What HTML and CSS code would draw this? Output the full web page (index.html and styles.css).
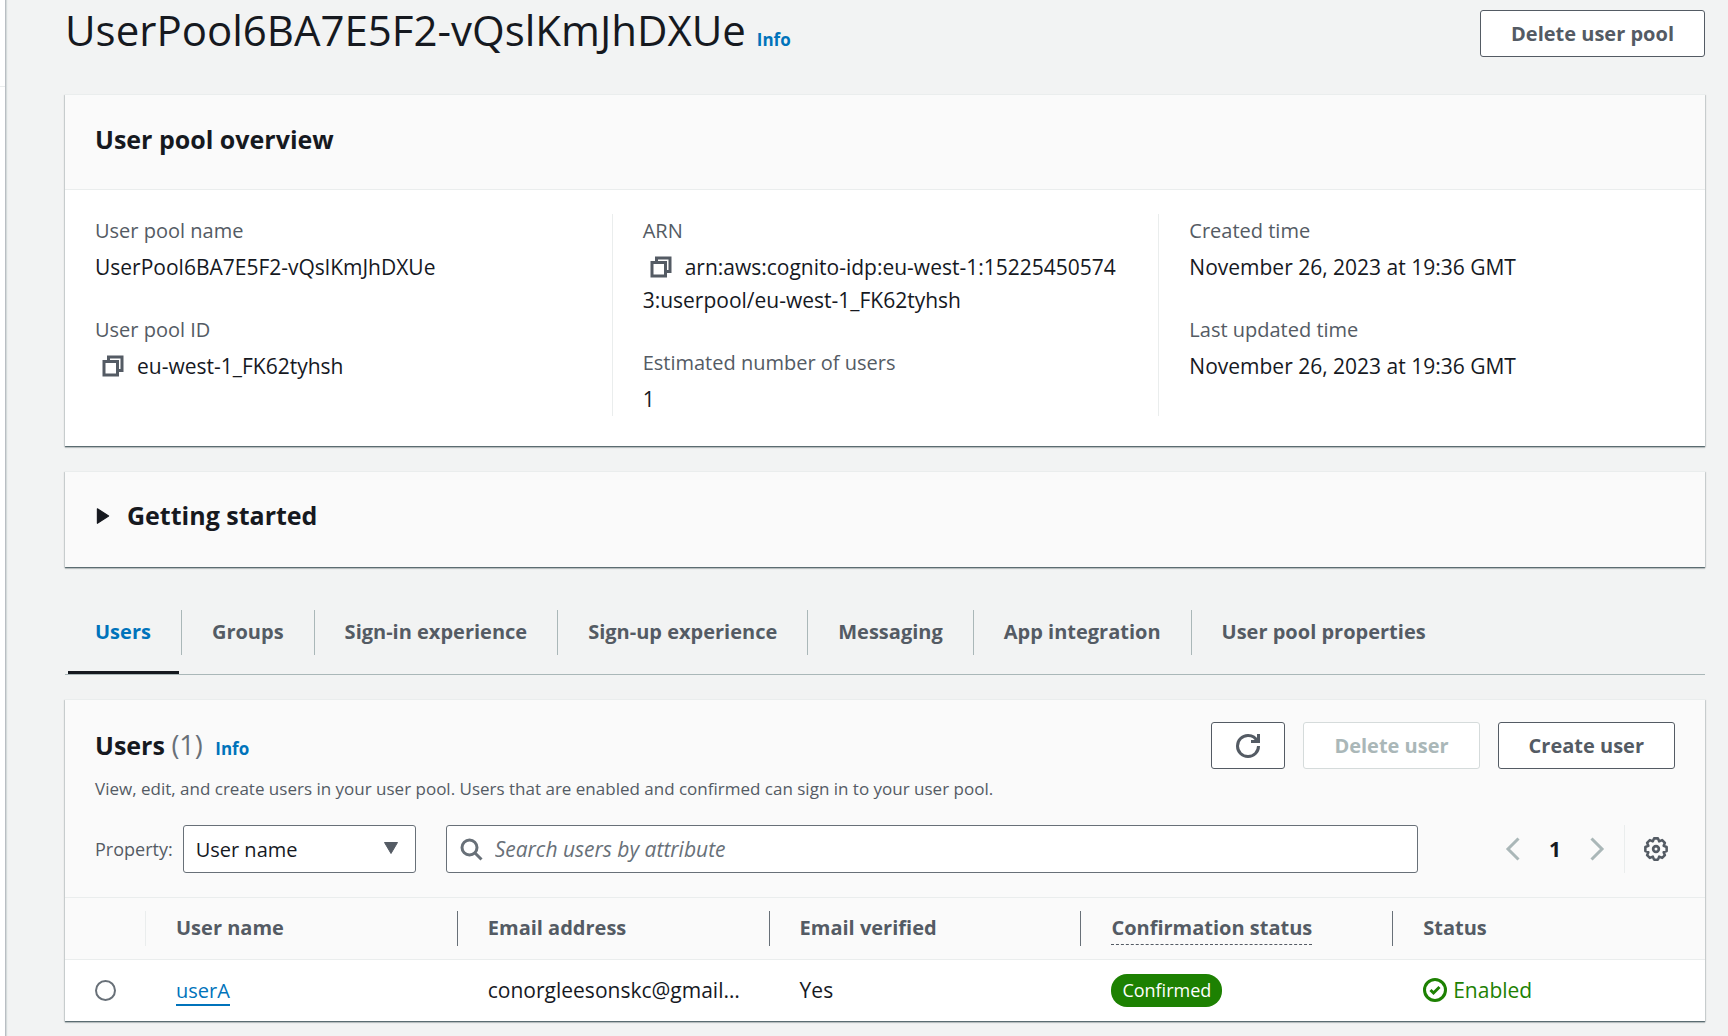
FILE: index.html
```html
<!DOCTYPE html>
<html lang="en">
<head>
<meta charset="utf-8">
<title>User pool</title>
<link rel="stylesheet" href="styles.css">
</head>
<body>
<aside class="sidebar"><hr class="sidebar-rule"></aside>
<main class="content">
  <header class="page-header">
    <h1 class="page-title">UserPool6BA7E5F2-vQslKmJhDXUe <a class="info" href="#info">Info</a></h1>
    <button class="button" type="button">Delete user pool</button>
  </header>

  <section class="card">
    <header class="card-header"><h2 class="card-title">User pool overview</h2></header>
    <div class="overview">
      <dl class="overview-column">
        <div class="pair"><dt>User pool name</dt><dd>UserPool6BA7E5F2-vQslKmJhDXUe</dd></div>
        <div class="pair"><dt>User pool ID</dt><dd><button class="copy" type="button" aria-label="Copy user pool ID"><svg class="icon" viewBox="0 0 16 16"><path d="M2 5h9v9H2zM5 5V2h9v9h-3"/></svg></button>eu-west-1_FK62tyhsh</dd></div>
      </dl>
      <dl class="overview-column">
        <div class="pair"><dt>ARN</dt><dd><button class="copy" type="button" aria-label="Copy ARN"><svg class="icon" viewBox="0 0 16 16"><path d="M2 5h9v9H2zM5 5V2h9v9h-3"/></svg></button>arn:aws:cognito-idp:eu-west-1:152254505743:userpool/eu-west-1_FK62tyhsh</dd></div>
        <div class="pair"><dt>Estimated number of users</dt><dd>1</dd></div>
      </dl>
      <dl class="overview-column">
        <div class="pair"><dt>Created time</dt><dd>November 26, 2023 at 19:36 GMT</dd></div>
        <div class="pair"><dt>Last updated time</dt><dd>November 26, 2023 at 19:36 GMT</dd></div>
      </dl>
    </div>
  </section>

  <section class="card">
    <h2 class="card-title">
      <button class="expander" type="button" aria-expanded="false"><svg class="caret" viewBox="0 0 14 16"><path d="M2 1.500L12 8L2 14.500Z"/></svg>Getting started</button>
    </h2>
  </section>

  <nav class="tabs" aria-label="User pool sections">
    <a class="tab tab-active" href="#users" aria-current="page"><span>Users</span></a>
    <a class="tab" href="#groups"><span>Groups</span></a>
    <a class="tab" href="#sign-in"><span>Sign-in experience</span></a>
    <a class="tab" href="#sign-up"><span>Sign-up experience</span></a>
    <a class="tab" href="#messaging"><span>Messaging</span></a>
    <a class="tab" href="#apps"><span>App integration</span></a>
    <a class="tab" href="#properties"><span>User pool properties</span></a>
  </nav>

  <section class="card">
    <header class="users-header">
      <div class="users-top">
        <h2 class="users-title">Users <span class="counter">(1)</span> <a class="info" href="#users-info">Info</a></h2>
        <div class="actions">
          <button class="button button-icon" type="button" aria-label="Refresh"><svg class="icon" viewBox="0 0 16 16"><path d="M10 5h5V0"/><path d="M15 8a6.957 6.957 0 0 1-7 7 6.957 6.957 0 0 1-7-7 6.957 6.957 0 0 1 7-7 6.870 6.870 0 0 1 6.300 4"/></svg></button>
          <button class="button" type="button" disabled>Delete user</button>
          <button class="button" type="button">Create user</button>
        </div>
      </div>
      <p class="description">View, edit, and create users in your user pool. Users that are enabled and confirmed can sign in to your user pool.</p>
      <div class="filters">
        <label class="property-label" for="property">Property:</label>
        <div class="select">
          <select id="property"><option>User name</option></select>
          <svg class="select-caret" viewBox="0 0 16 14"><path d="M1.500 1.500h13L8 12.500z"/></svg>
        </div>
        <label class="search">
          <svg class="icon" viewBox="0 0 16 16"><circle cx="7" cy="7" r="5"/><path d="m15 15-4.500-4.500"/></svg>
          <input type="search" placeholder="Search users by attribute" aria-label="Search users by attribute">
        </label>
        <div class="pagination">
          <button class="page-arrow" type="button" disabled aria-label="Previous page"><svg class="icon" viewBox="0 0 16 16"><path d="m11 1-7 7 7 7"/></svg></button>
          <button class="page-number" type="button">1</button>
          <button class="page-arrow" type="button" disabled aria-label="Next page"><svg class="icon" viewBox="0 0 16 16"><path d="m5 1 7 7-7 7"/></svg></button>
        </div>
        <div class="preferences">
          <button class="page-arrow settings" type="button" aria-label="Preferences"><svg class="icon" viewBox="-8 -8 16 16"><path stroke-width="1.700" stroke-linejoin="round" d="M7.100-1.300V1.300L5.100 2.100L5.940 4.100L4.100 5.940L2.100 5.100L1.300 7.100H-1.300L-2.100 5.100L-4.100 5.940L-5.940 4.100L-5.100 2.100L-7.100 1.300V-1.300L-5.100-2.100L-5.940-4.100L-4.100-5.940L-2.100-5.100L-1.300-7.100H1.300L2.100-5.100L4.100-5.940L5.940-4.100L5.100-2.100Z"/><circle cx="0" cy="0" r="1.900" stroke-width="1.800"/></svg></button>
        </div>
      </div>
    </header>
    <table class="table">
      <colgroup><col class="col-select"><col><col><col><col><col></colgroup>
      <thead>
        <tr>
          <th scope="col" aria-label="Selection"><div class="head"></div></th>
          <th scope="col"><div class="head">User name</div></th>
          <th scope="col"><div class="head">Email address</div></th>
          <th scope="col"><div class="head">Email verified</div></th>
          <th scope="col"><div class="head"><span class="hint">Confirmation status</span></div></th>
          <th scope="col"><div class="head">Status</div></th>
        </tr>
      </thead>
      <tbody>
        <tr>
          <td><input class="radio" type="radio" name="user" aria-label="Select userA"></td>
          <td><a class="user-link" href="#userA">userA</a></td>
          <td>conorgleesonskc@gmail…</td>
          <td>Yes</td>
          <td><span class="badge">Confirmed</span></td>
          <td><span class="status"><svg class="icon" viewBox="0 0 16 16"><circle cx="8" cy="8" r="7"/><path d="m5 8 2 2 4-4"/></svg>Enabled</span></td>
        </tr>
      </tbody>
    </table>
  </section>
</main>
</body>
</html>
```
FILE: styles.css
```css
* {
  box-sizing: border-box;
}

body {
  margin: 0;
  min-height: 100vh;
  display: flex;
  background: #f2f3f3;
  color: #16191f;
  font: 21px/33px "Open Sans", "Noto Sans", sans-serif;
}

h1, h2, p, dl, dd {
  margin: 0;
}

button, input, select {
  font: inherit;
  color: inherit;
}

a {
  text-decoration: none;
}

.icon {
  display: block;
  width: 24px;
  height: 24px;
  fill: none;
  stroke: currentColor;
  stroke-width: 2;
}

.sidebar {
  width: 6px;
  flex: none;
  background: #fff;
  border-right: 1px solid #b9bec3;
  box-shadow: 1px 0 1px #d5dbdb;
}

.sidebar-rule {
  margin: 86px 0 0;
  border: 0;
  border-top: 1px solid #eaeded;
}

.content {
  flex: 1;
  min-width: 0;
  padding: 10px 23px 15px 59px;
}

.page-header {
  display: flex;
  justify-content: space-between;
  align-items: flex-start;
  margin-bottom: 37px;
}

.page-title {
  font-size: 42px;
  line-height: 40px;
  font-weight: 400;
}

.info {
  color: #0073bb;
  font-size: 17px;
  line-height: 17px;
  font-weight: 700;
}

.button {
  height: 47px;
  padding: 0 30px;
  border: 1px solid #545b64;
  border-radius: 3px;
  background: #fff;
  color: #545b64;
  font-size: 20px;
  font-weight: 700;
}

.button:disabled {
  border-color: #d5dbdb;
  color: #aab7b8;
}

.button-icon {
  padding: 0 24px;
}

.card {
  margin-bottom: 25px;
  background: #fff;
  border-top: 1px solid #eaeded;
  box-shadow: 0 1px 0 rgba(0, 28, 36, 0.35), 0 2px 1px rgba(0, 28, 36, 0.2), 1px 1px 1px rgba(0, 28, 36, 0.15), -1px 1px 1px rgba(0, 28, 36, 0.15);
}

.card-title {
  font-size: 25px;
  line-height: 33px;
  font-weight: 700;
}

.card-header {
  padding: 28px 30px 33px;
  background: #fafafa;
  border-bottom: 1px solid #eaeded;
}

.overview {
  display: grid;
  grid-template-columns: repeat(3, 1fr);
  padding: 24px 0 30px;
}

.overview-column {
  display: flex;
  flex-direction: column;
  gap: 29px;
  padding: 0 30px;
}

.overview-column + .overview-column {
  border-left: 1px solid #eaeded;
}

.pair {
  display: flex;
  flex-direction: column;
  gap: 4px;
}

dt {
  color: #545b64;
  font-size: 20px;
}

dd {
  word-break: break-all;
}

.copy {
  height: 32px;
  padding: 0 12px 0 6px;
  border: 0;
  background: none;
  color: #545b64;
  vertical-align: top;
}

.expander {
  display: flex;
  align-items: center;
  gap: 16px;
  width: 100%;
  padding: 27px 30px 35px;
  border: 0;
  background: #fafafa;
  text-align: left;
}

.caret {
  width: 16px;
  height: 18px;
  fill: currentColor;
  stroke: currentColor;
  stroke-linejoin: round;
}

.tabs {
  display: flex;
  margin-top: 43px;
  margin-bottom: 24px;
  border-bottom: 1px solid #aab7b8;
}

.tab {
  padding-bottom: 19px;
  color: #545b64;
  font-size: 20px;
  font-weight: 700;
}

.tab span {
  display: block;
  padding: 5px 30px 7px;
  border-right: 1px solid #aab7b8;
}

.tab:last-child span {
  border-right: 0;
}

.tab-active {
  padding-bottom: 0;
  color: #0073bb;
}

.tab-active::after {
  content: "";
  display: block;
  height: 3px;
  margin: 16px 3px 0;
  background: #16191f;
}

.users-header {
  padding: 22px 30px 24px;
  background: #fafafa;
  border-bottom: 1px solid #eaeded;
}

.users-top {
  display: flex;
  justify-content: space-between;
}

.users-title {
  font-size: 25px;
  line-height: 45px;
}

.users-title .info {
  margin-left: 6px;
}

.counter {
  color: #687078;
  font-size: 27px;
  font-weight: 400;
}

.actions {
  display: flex;
  gap: 18px;
}

.description {
  margin: 2px 0 18px;
  color: #545b64;
  font-size: 17px;
  line-height: 36px;
}

.filters {
  display: flex;
  align-items: center;
}

.property-label {
  margin-right: 10px;
  color: #545b64;
  font-size: 18px;
}

.select {
  position: relative;
  width: 233px;
  margin-right: 30px;
}

.select select {
  display: block;
  appearance: none;
  width: 100%;
  height: 48px;
  padding: 0 12px;
  border: 1px solid #687078;
  border-radius: 3px;
  background: #fff;
  font-size: 20px;
}

.select-caret {
  position: absolute;
  right: 17px;
  top: 16px;
  width: 16px;
  height: 14px;
  fill: #545b64;
  stroke: #545b64;
  stroke-linejoin: round;
}

.search {
  flex: 1;
  display: flex;
  align-items: center;
  gap: 12px;
  height: 48px;
  padding: 0 12px;
  border: 1px solid #687078;
  border-radius: 3px;
  background: #fff;
  color: #687078;
}

.search input {
  flex: 1;
  min-width: 0;
  padding: 0;
  border: 0;
  outline: 0;
  background: none;
}

.search input::placeholder {
  color: #687078;
  font-style: italic;
  opacity: 1;
}

.pagination {
  display: flex;
  align-items: center;
  gap: 23px;
  margin-left: 84px;
}

.page-arrow, .page-number {
  padding: 0;
  border: 0;
  background: none;
}

.page-arrow {
  color: #aab7b8;
}

.page-number {
  width: 12px;
  font-weight: 700;
}

.preferences {
  display: flex;
  align-items: center;
  height: 48px;
  margin-left: 16px;
  padding: 0 7px 0 19px;
  border-left: 1px solid #eaeded;
}

.settings {
  color: #545b64;
}

.table {
  width: 100%;
  table-layout: fixed;
  border-collapse: collapse;
}

.col-select {
  width: 81px;
}

th {
  padding: 13px 0;
  background: #fafafa;
  border-bottom: 1px solid #eaeded;
  color: #545b64;
  font-size: 20px;
  text-align: left;
}

.head {
  height: 35px;
  padding-left: 30px;
  border-right: 1px solid #687078;
}

th:first-child .head {
  border-color: #eaeded;
}

th:last-child .head {
  border-right: 0;
}

.hint {
  display: inline-block;
  border-bottom: 1px dashed #545b64;
}

td {
  height: 61px;
  padding: 0 0 0 30px;
}

.radio {
  display: block;
  appearance: none;
  width: 21px;
  height: 21px;
  margin: 0;
  border: 2px solid #687078;
  border-radius: 50%;
  background: #fff;
}

.user-link {
  color: #0073bb;
  font-size: 20px;
  border-bottom: 2px solid #0073bb;
}

.badge {
  display: inline-block;
  padding: 0 11px;
  border-radius: 16px;
  background: #1d8102;
  color: #fff;
  font-size: 18px;
  vertical-align: top;
}

.status {
  display: flex;
  align-items: center;
  gap: 6px;
  color: #1d8102;
}
```
